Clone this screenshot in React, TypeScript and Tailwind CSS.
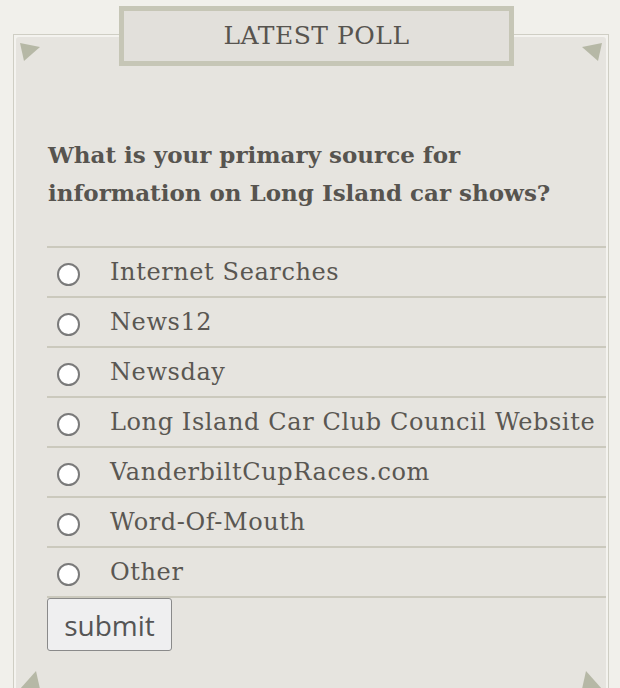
import { useState } from 'react';

const options = [
  'Internet Searches',
  'News12',
  'Newsday',
  'Long Island Car Club Council Website',
  'VanderbiltCupRaces.com',
  'Word-Of-Mouth',
  'Other',
];

const slab = { fontFamily: '"DejaVu Serif", "Liberation Serif", serif' };

function Corner({ points }: { points: string }) {
  return (
    <svg className="w-[20px] h-[18px]" viewBox="0 0 20 18">
      <polygon points={points} fill="#b6b8a6" />
    </svg>
  );
}

export default function App() {
  const [choice, setChoice] = useState<string>('');

  return (
    <div className="w-[620px] h-[688px] overflow-hidden bg-[#f1f0eb] pt-[6px]">
      {/* title tab sits over the frame's top edge */}
      <div className="relative z-10 ml-[119px] w-[395px] h-[60px] border-[5px] border-[#c6c6b6] bg-[#e2e0db] flex items-center justify-center">
        <span className="text-[25px] text-[#57544f] tracking-[0.5px]" style={slab}>
          LATEST POLL
        </span>
      </div>

      <div className="-mt-[32px] ml-[13px] mr-[11px] border border-[#cfcec4] p-[2px] bg-[#f4f3ef]">
        <div className="h-[660px] flex flex-col bg-[#e6e4df] rounded-[3px] pt-[6px] pb-[8px]">
          <div className="flex justify-between px-[4px]">
            <Corner points="0,0 20,4 4,18" />
            <Corner points="20,0 0,4 16,18" />
          </div>

          <div className="pl-[31px] pt-[75px]">
            <h2
              className="ml-[1px] text-[23px] font-bold leading-[38px] whitespace-nowrap text-[#57544f]"
              style={slab}
            >
              What is your primary source for
              <br />
              information on Long Island car shows?
            </h2>

            <form onSubmit={(e) => e.preventDefault()} className="mt-[34px]">
              <ul className="border-t-2 border-[#cbc9bd]">
                {options.map((opt) => (
                  <li key={opt} className="h-[50px] border-b-2 border-[#cbc9bd] flex items-center">
                    <label className="flex items-center cursor-pointer" onClick={() => setChoice(opt)}>
                      <span className="ml-[10px] mt-[4px] w-[23px] h-[23px] rounded-full border-2 border-[#7a7a7a] bg-white flex items-center justify-center">
                        {choice === opt && <span className="w-[11px] h-[11px] rounded-full bg-[#555]" />}
                      </span>
                      <span className="ml-[30px] text-[24px] tracking-[0.6px] text-[#5a5752]" style={slab}>
                        {opt}
                      </span>
                    </label>
                  </li>
                ))}
              </ul>
              <button
                type="submit"
                className="w-[125px] h-[53px] border border-[#8a8a8a] rounded-[3px] bg-[#efeff0] text-[28px] text-[#555]"
                style={{ fontFamily: '"Open Sans", "Noto Sans", sans-serif' }}
              >
                submit
              </button>
            </form>
          </div>

          <div className="mt-auto flex justify-between px-[4px]">
            <Corner points="0,18 16,0 20,18" />
            <Corner points="20,18 4,0 0,18" />
          </div>
        </div>
      </div>
    </div>
  );
}
